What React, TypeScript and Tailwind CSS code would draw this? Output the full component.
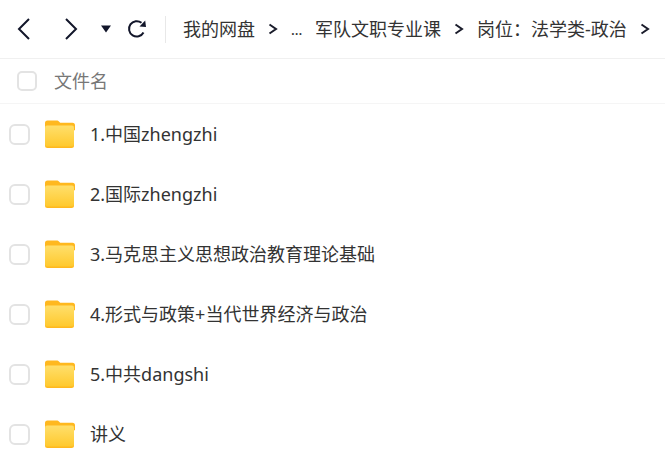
import React from 'react'

const files = [
  '1.中国zhengzhi',
  '2.国际zhengzhi',
  '3.马克思主义思想政治教育理论基础',
  '4.形式与政策+当代世界经济与政治',
  '5.中共dangshi',
  '讲义',
]

const Folder = () => (
  <svg width="30" height="28" viewBox="0 0 30 28" className="shrink-0">
    <defs>
      <linearGradient id="folderFront" x1="0" y1="0" x2="0" y2="1">
        <stop offset="0" stopColor="#ffdf6b" />
        <stop offset="1" stopColor="#ffc92e" />
      </linearGradient>
    </defs>
    <path d="M0 3a2.500 2.500 0 0 1 2.500-2.500h9c1.200 0 2 .4 2.700 1.200l1 1.100h12.300a2.500 2.500 0 0 1 2.500 2.500v5H0z" fill="#ffb81f" />
    <rect x="0" y="4.500" width="29" height="23.500" rx="2.500" fill="#ffb81f" />
    <rect x="0" y="5.500" width="29" height="21" rx="2" fill="url(#folderFront)" />
  </svg>
)

const Chevron = () => (
  <svg width="10" height="12" viewBox="0 0 10 12" className="shrink-0">
    <path d="M1.500 1.500 8 6l-6.500 4.500" fill="none" stroke="#1a1c2b" strokeWidth="2" />
  </svg>
)

export default function App() {
  return (
    <div className="w-[665px] h-[469px] overflow-hidden bg-white text-[#333] font-['Noto_Sans','Noto_Sans_CJK_SC',sans-serif]">
      <header className="h-[59px] flex items-center border-b border-[#f0f0f0] whitespace-nowrap">
        <div className="flex items-center pl-[17px] w-[165px] h-full">
          <svg width="13" height="22" viewBox="0 0 13 22" className="shrink-0">
            <path d="M12 1 2 11l10 10" fill="none" stroke="#12162a" strokeWidth="2" />
          </svg>
          <svg width="13" height="22" viewBox="0 0 13 22" className="shrink-0 ml-[35px]">
            <path d="M1 1l10 10L1 21" fill="none" stroke="#12162a" strokeWidth="2" />
          </svg>
          <svg width="10" height="8" viewBox="0 0 10 8" className="shrink-0 ml-[23px]">
            <path d="M0 .5h10L5 7.500z" fill="#12162a" />
          </svg>
          <svg width="20" height="20" viewBox="0 0 20 20" className="shrink-0 ml-[16px]">
            <path d="M16.500 13.500A7.700 7.700 0 1 1 14.500 3.800" fill="none" stroke="#12162a" strokeWidth="2" />
            <path d="M12.500 7.500 19 8l-.8-6.500z" fill="#12162a" />
          </svg>
        </div>
        <div className="w-px h-[27px] bg-[#e8e8e8] shrink-0" />
        <nav className="flex items-center text-[18px] ml-[17px] h-full">
          <span>我的网盘</span>
          <span className="ml-[13px]"><Chevron /></span>
          <span className="ml-[13px] w-[24px] text-[14px] font-medium">...</span>
          <span>军队文职专业课</span>
          <span className="ml-[13px]"><Chevron /></span>
          <span className="ml-[13px]">岗位：法学类-政治</span>
          <span className="ml-[13px]"><Chevron /></span>
        </nav>
      </header>
      <div className="h-[45px] flex items-center pl-[17px] border-b border-[#f5f5f5]">
        <span className="w-5 h-5 rounded-[5px] border-2 border-[#e3e3e3] shrink-0" />
        <span className="ml-[17px] text-[18px] text-[#777]">文件名</span>
      </div>
      <ul>
        {files.map((name) => (
          <li key={name} className="h-[60px] flex items-center pl-[9px]">
            <span className="w-[21px] h-[21px] rounded-[6px] border-2 border-[#e3e3e3] shrink-0" />
            <span className="ml-[15px]"><Folder /></span>
            <span className="ml-[15px] text-[18px] text-[#333]">{name}</span>
          </li>
        ))}
      </ul>
    </div>
  )
}
